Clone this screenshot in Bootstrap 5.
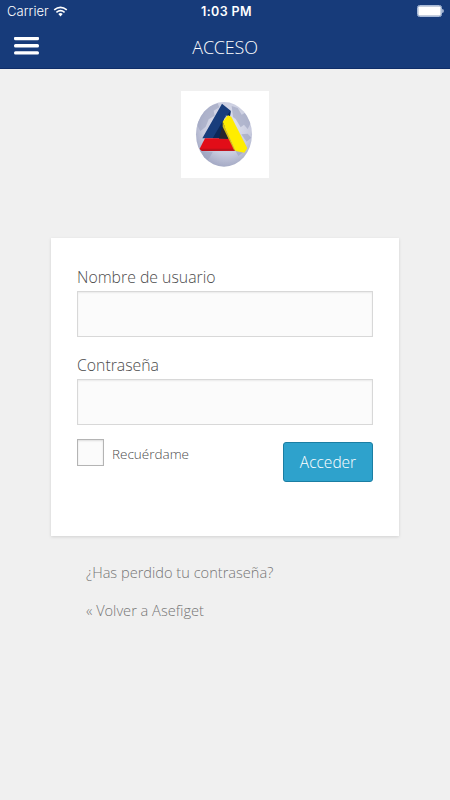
<!DOCTYPE html>
<html lang="es">
<head>
<meta charset="utf-8">
<meta name="viewport" content="width=device-width, initial-scale=1">
<title>Acceso</title>
<link href="https://cdn.jsdelivr.net/npm/bootstrap@5.3.0/dist/css/bootstrap.min.css" rel="stylesheet">
<style>
body{background:#f0f0f0;font-family:"Open Sans",sans-serif;font-weight:300;color:#4c4c4c;min-height:800px;overflow:hidden}
.topbar{background:#173b7a;height:69px;border-bottom:1px solid #0f2d68;color:#fff}
.status{height:22px;font:13px/22px Inter,Roboto,sans-serif;padding:0 6px 0 7px}
.carrier{letter-spacing:.05px;font-weight:300}
.clock{font-weight:600;font-size:12.5px;letter-spacing:.4px;padding:2px 0 0 2px}
.titlebar{height:48px;padding:0 14px}
.menu-btn{width:25px;height:19px}
.title{font-size:18px;font-weight:300;line-height:24px;letter-spacing:-.2px;padding-top:2px}
.side{flex:1 1 0}
.logo-box{width:88px;height:87px;margin-top:22px}
.panel{width:348px;height:298px;margin:60px 0 0 51px;padding:27px 26px 0;box-shadow:0 1px 3px rgba(0,0,0,.13)}
.field-label{font-size:15.8px;line-height:24px;margin-bottom:2px}
.field{height:46px;border:1px solid #d8d8d8;background:#fbfbfb;box-shadow:inset 0 1px 2px rgba(0,0,0,.07)}
.field:focus{background:#fbfbfb}
.check{width:27px;height:27px;margin:0;border:1px solid #b4b4b4;background-color:#fbfbfb;box-shadow:inset 0 1px 2px rgba(0,0,0,.12)}
.actions{margin-top:14px}
.check-label{font-size:13.5px;line-height:20px;padding-top:2px}
.enter{width:90px;height:40px;margin-top:3px;font-size:15.5px;font-weight:300;line-height:24px;background:#2ea2cc;border:1px solid #1b7ea3;border-radius:3px;color:#fff}
.foot{margin:26px 0 0 86px;font-size:14.6px;line-height:20px;gap:18px}
.foot a{color:#757575}
</style>
</head>
<body>
<header class="topbar">
  <div class="status d-flex align-items-center">
    <div class="side d-flex align-items-center">
      <span class="carrier">Carrier</span>
      <svg class="ms-1" width="15" height="11" viewBox="0 0 15 11" fill="none" stroke="#fff" stroke-width="1.6"><path d="M1.2 3.9Q7.5-1.2 13.8 3.9M3.4 6.4Q7.5 3 11.6 6.4"/><path d="M5.3 7.9Q7.5 6.2 9.7 7.9L7.5 10.4z" fill="#fff" stroke="none"/></svg>
    </div>
    <span class="clock">1:03 PM</span>
    <div class="side d-flex justify-content-end">
      <svg width="27" height="12" viewBox="0 0 27 12"><rect x=".5" y=".5" width="24" height="11" rx="2" fill="#173b7a" stroke="#a9bbd8"/><rect x="1.2" y="1.2" width="22.6" height="9.6" rx="1" fill="#fff"/><path d="M25.3 4q1.4 0 1.4 2t-1.4 2z" fill="#dce4f2"/></svg>
    </div>
  </div>
  <div class="titlebar d-flex align-items-center">
    <div class="side d-flex"><button class="btn p-0 border-0 d-flex" aria-label="Menú"><svg class="menu-btn" viewBox="0 0 25 19" fill="#fff"><rect y="-.2" width="25" height="3.4" rx="1.5"/><rect y="7" width="25" height="3.4" rx="1.5"/><rect y="14.2" width="25" height="3.4" rx="1.5"/></svg></button></div>
    <h1 class="title m-0">ACCESO</h1>
    <div class="side"></div>
  </div>
</header>
<main>
  <div class="logo-box mx-auto bg-white">
    <svg class="d-block" width="88" height="87" viewBox="18 18 264 261">
      <defs><radialGradient id="globe" cx=".55" cy=".38" r=".65"><stop offset="0" stop-color="#e6e8f2"/><stop offset=".65" stop-color="#c9ccdf"/><stop offset="1" stop-color="#a0a6c2"/></radialGradient>
      <clipPath id="disc"><ellipse cx="147" cy="148" rx="84" ry="97"/></clipPath></defs>
      <ellipse cx="147" cy="148" rx="84" ry="97" fill="url(#globe)"/>
      <g clip-path="url(#disc)" fill="#9ba2bf" opacity=".6">
        <path d="M76 95 97 66 128 55 133 67 116 77 119 92 101 103 92 125 76 139 65 117z"/>
        <path d="M170 63 188 69 200 89 211 83 227 115 218 132 207 119 197 127 182 102 174 96z"/>
        <path d="M81 199 113 201 105 216 91 233 84 221z"/>
        <path d="M199 148 218 146 229 158 215 170zM180 195 205 202 190 213z"/>
      </g>
      <path d="M141 56 167 77 165 94 153 91 145 107 149 122 135 160 82 160z" fill="#183d7c"/>
      <path d="M167 77 165 94 153 91 145 107 149 122 135 160 113 160 145 105z" fill="#0c2859"/>
      <path d="M90 160H163L180 197 81 198 74 191z" fill="#e20d18"/>
      <path d="M74 191H177L180 197 81 198z" fill="#bb101a"/>
      <path d="M140 130 150 128 161 162 132 161z" fill="#27242e"/>
      <path d="M159 91 169 95 217 190 208 203 182 198 143 110z" fill="#ffed00"/>
      <path d="M143 110 182 198 177 195 143 125z" fill="#d9bf0b"/>
    </svg>
  </div>
  <form class="panel bg-white" onsubmit="return false">
    <label class="field-label d-block" for="user">Nombre de usuario</label>
    <input class="field form-control rounded-0" id="user" type="text">
    <label class="field-label d-block mt-3" for="pass">Contraseña</label>
    <input class="field form-control rounded-0" id="pass" type="password">
    <div class="actions d-flex justify-content-between align-items-start">
      <div class="d-flex align-items-center gap-2">
        <input class="check form-check-input rounded-0" type="checkbox" id="remember">
        <label class="check-label" for="remember">Recuérdame</label>
      </div>
      <button class="enter btn p-0" type="submit">Acceder</button>
    </div>
  </form>
  <nav class="foot d-flex flex-column align-items-start">
    <a class="text-decoration-none" href="#">¿Has perdido tu contraseña?</a>
    <a class="text-decoration-none" href="#">« Volver a Asefiget</a>
  </nav>
</main>
<script src="https://cdn.jsdelivr.net/npm/bootstrap@5.3.0/dist/js/bootstrap.bundle.min.js"></script>
</body>
</html>
